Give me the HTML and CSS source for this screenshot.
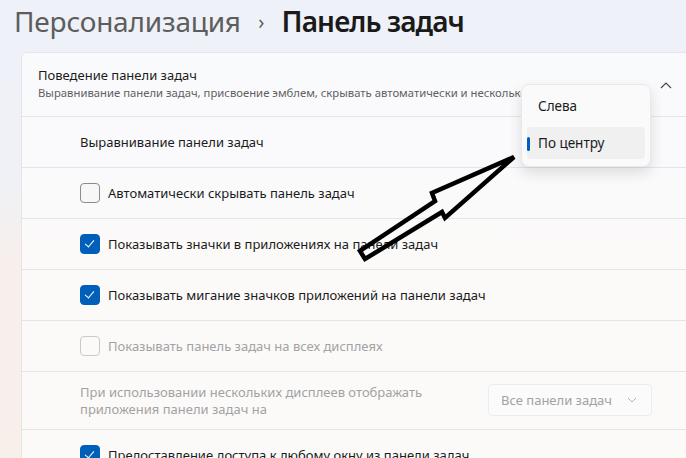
FILE: index.html
```html
<!doctype html>
<html lang="ru">
  <head>
    <meta charset="utf-8">
    <meta name="viewport" content="width=device-width,initial-scale=1">
    <title>Панель задач</title>
    <link rel="stylesheet" href="styles.css">
  </head>

  <body>
    <main class="page">
      <h1 class="crumbs">
        <span class="crumb-parent">Персонализация</span>
        <span class="crumb-sep">›</span>
        <span class="crumb-current">Панель задач</span>
      </h1>

      <section class="card">
        <header class="card-head">
          <div>
            <div class="card-title">Поведение панели задач</div>
            <div class="card-sub">Выравнивание панели задач, присвоение эмблем, скрывать автоматически и несколько дисплеев</div>
          </div>
          <svg class="chevron" width="12" height="8" viewBox="0 0 12 8">
            <path d="M1 7 L6 2 L11 7" fill="none" stroke="#444" stroke-width="1.1"/>
          </svg>
        </header>

        <div class="row">
          <span class="label">Выравнивание панели задач</span>
        </div>

        <div class="row">
          <span class="box"></span>
          <span class="label">Автоматически скрывать панель задач</span>
        </div>

        <div class="row">
          <span class="box checked"></span>
          <span class="label">Показывать значки в приложениях на панели задач</span>
        </div>

        <div class="row">
          <span class="box checked"></span>
          <span class="label">Показывать мигание значков приложений на панели задач</span>
        </div>

        <div class="row disabled">
          <span class="box"></span>
          <span class="label">Показывать панель задач на всех дисплеях</span>
        </div>

        <div class="row row-tall disabled">
          <span class="label label-wrap">При использовании нескольких дисплеев отображать приложения панели задач на</span>
          <span class="combo">
            Все панели задач
            <svg width="10" height="6" viewBox="0 0 10 6">
              <path d="M1 1 L5 5 L9 1" fill="none" stroke="#b0b0b0" stroke-width="1"/>
            </svg>
          </span>
        </div>

        <div class="row">
          <span class="box checked"></span>
          <span class="label">Предоставление доступа к любому окну из панели задач</span>
        </div>
      </section>

      <!-- alignment picker, open -->
      <div class="flyout">
        <div class="option">Слева</div>
        <div class="option selected">По центру</div>
      </div>

      <svg class="pointer" width="686" height="458" viewBox="0 0 686 458">
        <polygon points="514,157 432,193 435,201 360,251 365,259 442,212 445,218"
                 fill="none" stroke="#000" stroke-width="4.5" stroke-linejoin="miter"/>
      </svg>
    </main>
  </body>
</html>
```

FILE: styles.css
```css
html, body {
  margin: 0;
  height: 100%;
  overflow: hidden;
}

body {
  font-family: "Noto Sans", "Open Sans", sans-serif;
  font-size: 13px;
  color: #1b1b1b;
  background: linear-gradient(180deg, #eef1f8 0%, #eff1f6 38%, #f6efec 55%, #f8efeb 100%);
}

.page {
  position: relative;
  height: 100%;
}

.crumbs {
  margin: 0;
  padding: 3px 0 0 14px;
  height: 49px;
  font-size: 28px;
  font-weight: 400;
  line-height: 36px;
  white-space: nowrap;
}

.crumb-parent {
  color: #5d5d5d;
  letter-spacing: -0.2px;
}

.crumb-sep {
  color: #5d5d5d;
  font-size: 20px;
  margin: 0 10px 0 10px;
  position: relative;
  top: -3px;
}

.crumb-current {
  color: #1a1a1a;
  font-weight: 600;
  letter-spacing: -0.9px;
}

.card {
  margin-left: 21px;
  width: 690px;
  background: rgba(253, 253, 253, 0.72);
  border: 1px solid #e6e6e6;
  border-radius: 6px 0 0 0;
}

.card-head {
  height: 63px;
  display: flex;
  align-items: center;
  justify-content: space-between;
  padding: 0 40px 0 16px;
  border-bottom: 1px solid #e5e5e5;
  white-space: nowrap;
  overflow: hidden;
}

.card-head > div {
  margin-top: -2px;
}

.card-title {
  font-size: 13px;
  line-height: 19px;
}

.card-sub {
  font-size: 11.3px;
  line-height: 16px;
  color: #5f5f5f;
}

.chevron {
  flex: none;
  margin-left: 20px;
  margin-bottom: 0;
}

.row {
  height: 50px;
  display: flex;
  align-items: center;
  padding-left: 58px;
  border-bottom: 1px solid #e5e5e5;
  white-space: nowrap;
}

.row-tall {
  height: 57px;
  padding-right: 60px;
  justify-content: space-between;
}

.label {
  line-height: 20px;
}

.label-wrap {
  white-space: normal;
  width: 380px;
  line-height: 17px;
}

.disabled .label {
  color: #a2a2a2;
}

.box {
  width: 18px;
  height: 18px;
  border: 1px solid #8b8b8b;
  border-radius: 4px;
  background: #f7f7f7;
  margin-right: 8px;
  flex: none;
  position: relative;
}

.disabled .box {
  border-color: #c9c9c9;
  background: transparent;
}

.box.checked {
  border-color: #005fb8;
  background: #005fb8;
}

.box.checked::after {
  content: "";
  position: absolute;
  left: 6px;
  top: 3px;
  width: 4px;
  height: 8px;
  border: solid #fff;
  border-width: 0 1.5px 1.5px 0;
  transform: rotate(40deg);
}

.combo {
  display: flex;
  align-items: center;
  justify-content: space-between;
  width: 136px;
  height: 30px;
  padding: 0 14px 0 12px;
  border: 1px solid #ececec;
  border-radius: 4px;
  background: #fbfbfb;
  color: #a2a2a2;
  margin-bottom: 2px;
}

.flyout {
  position: absolute;
  left: 521px;
  top: 84px;
  width: 118px;
  padding: 4px 5px;
  background: #fafafa;
  border: 1px solid #e9e9e9;
  border-radius: 8px;
  box-shadow: 0 6px 14px rgba(0, 0, 0, 0.12);
}

.option {
  position: relative;
  height: 32px;
  line-height: 32px;
  padding-left: 11px;
  margin: 3px 0;
  border-radius: 4px;
  font-size: 13.5px;
}

.option:first-child {
  line-height: 28px;
}

.option.selected {
  background: #f0f0f0;
}

.option.selected::before {
  content: "";
  position: absolute;
  left: 0;
  top: 10px;
  width: 3px;
  height: 14px;
  border-radius: 2px;
  background: #005fb8;
}

.pointer {
  position: absolute;
  left: 0;
  top: 0;
  pointer-events: none;
}
```
